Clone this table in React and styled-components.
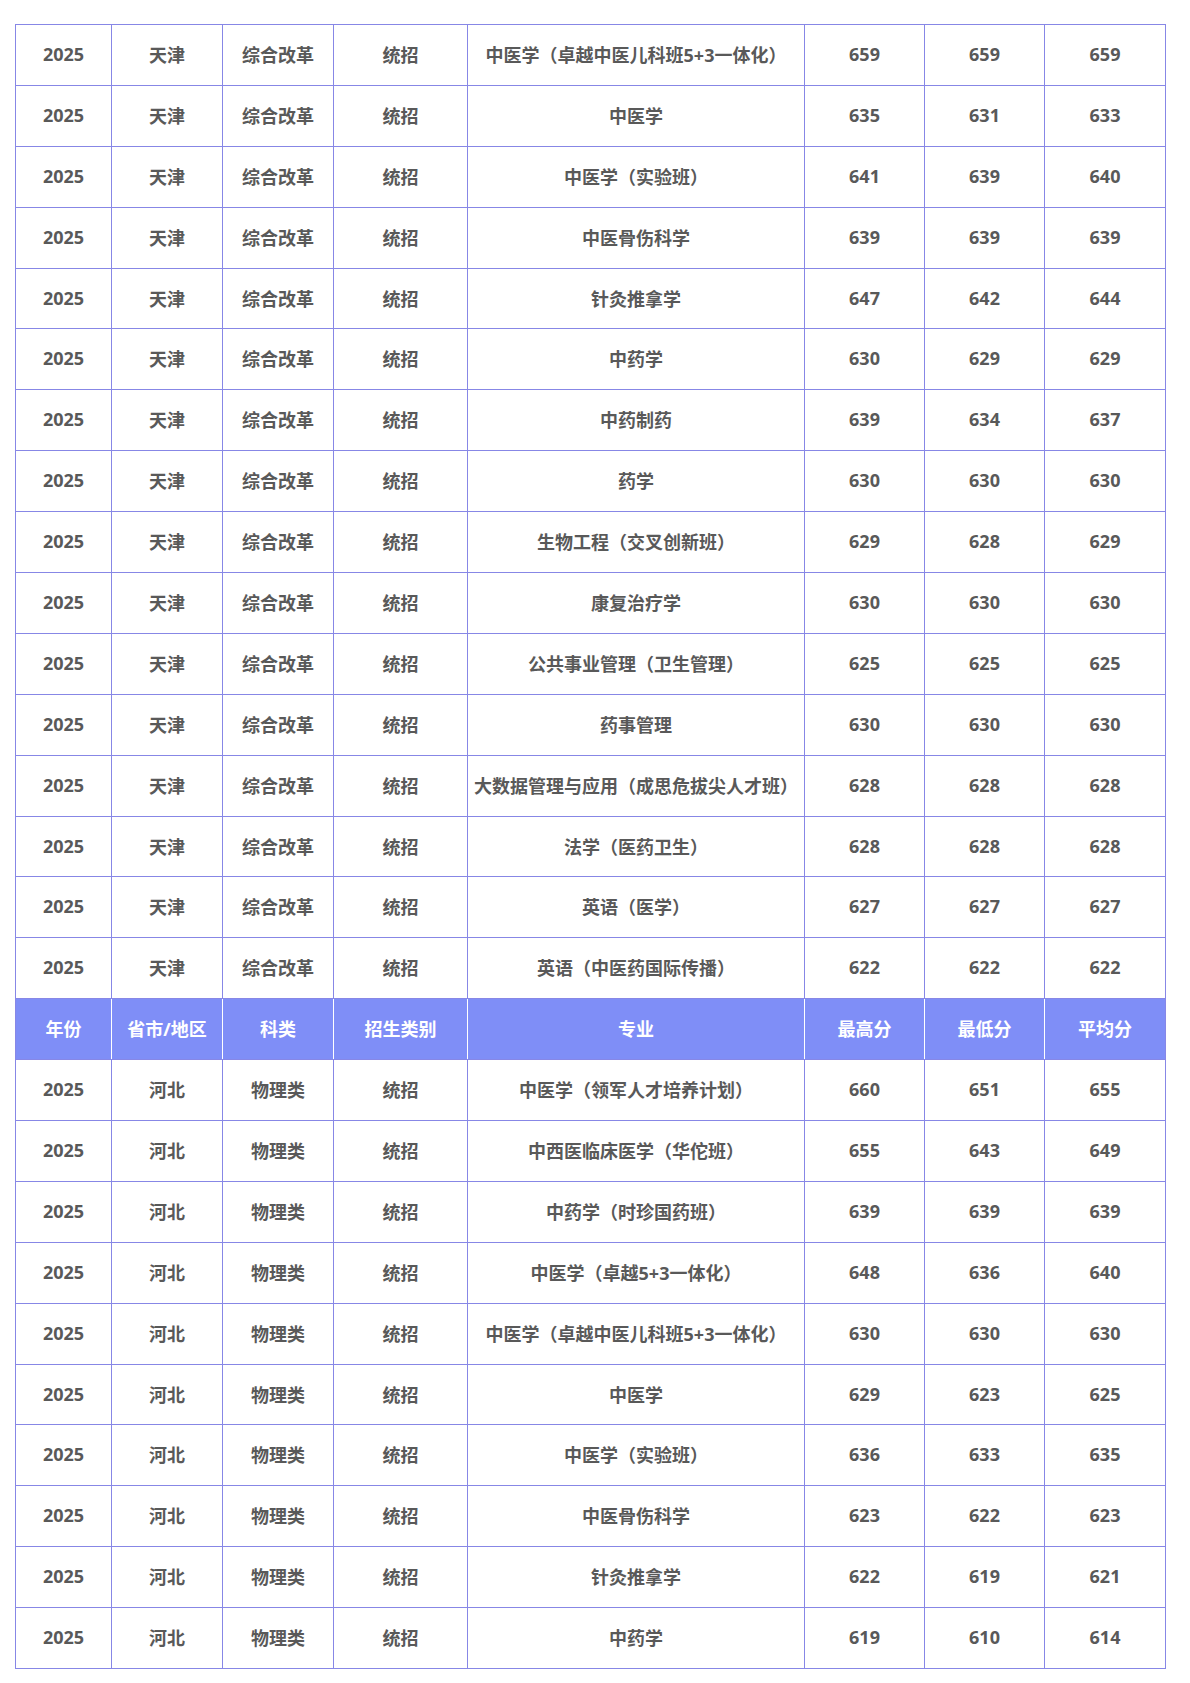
import React from "react";
import styled, { createGlobalStyle } from "styled-components";

const tianjin = [
  ["中医学（卓越中医儿科班5+3一体化）", 659, 659, 659],
  ["中医学", 635, 631, 633],
  ["中医学（实验班）", 641, 639, 640],
  ["中医骨伤科学", 639, 639, 639],
  ["针灸推拿学", 647, 642, 644],
  ["中药学", 630, 629, 629],
  ["中药制药", 639, 634, 637],
  ["药学", 630, 630, 630],
  ["生物工程（交叉创新班）", 629, 628, 629],
  ["康复治疗学", 630, 630, 630],
  ["公共事业管理（卫生管理）", 625, 625, 625],
  ["药事管理", 630, 630, 630],
  ["大数据管理与应用（成思危拔尖人才班）", 628, 628, 628],
  ["法学（医药卫生）", 628, 628, 628],
  ["英语（医学）", 627, 627, 627],
  ["英语（中医药国际传播）", 622, 622, 622],
];

const hebei = [
  ["中医学（领军人才培养计划）", 660, 651, 655],
  ["中西医临床医学（华佗班）", 655, 643, 649],
  ["中药学（时珍国药班）", 639, 639, 639],
  ["中医学（卓越5+3一体化）", 648, 636, 640],
  ["中医学（卓越中医儿科班5+3一体化）", 630, 630, 630],
  ["中医学", 629, 623, 625],
  ["中医学（实验班）", 636, 633, 635],
  ["中医骨伤科学", 623, 622, 623],
  ["针灸推拿学", 622, 619, 621],
  ["中药学", 619, 610, 614],
];

const headers = ["年份", "省市/地区", "科类", "招生类别", "专业", "最高分", "最低分", "平均分"];
const widths = [96, 111, 111, 134, 337, 120, 120, 121];

const GlobalStyle = createGlobalStyle`
  body {
    margin: 0;
    background: #ffffff;
  }
`;

const Page = styled.div`
  padding: 24px 15px 15px;
`;

const Table = styled.table`
  width: 1150px;
  border-collapse: collapse;
  table-layout: fixed;
  font-family: "Open Sans", "Noto Sans CJK SC", sans-serif;
  font-size: 18px;
  font-weight: 700;
`;

const Row = styled.tr`
  height: 60.9px;
`;

const Cell = styled.td`
  border: 1px solid #8787e6;
  color: #595959;
  text-align: center;
  vertical-align: middle;
  padding: 0 0 2px;
  white-space: nowrap;
`;

const HeadCell = styled.td`
  background: #7f8ef7;
  color: #ffffff;
  text-align: center;
  vertical-align: middle;
  padding: 0 0 2px;
  border: 1px solid #8787e6;
  border-left-color: #ffffff;
  border-right-color: #ffffff;
  &:first-child {
    border-left-color: #8787e6;
  }
  &:last-child {
    border-right-color: #8787e6;
  }
`;

function DataRow({ province, track, item }) {
  const [major, high, low, avg] = item;
  return (
    <Row>
      <Cell>2025</Cell>
      <Cell>{province}</Cell>
      <Cell>{track}</Cell>
      <Cell>统招</Cell>
      <Cell>{major}</Cell>
      <Cell>{high}</Cell>
      <Cell>{low}</Cell>
      <Cell>{avg}</Cell>
    </Row>
  );
}

export default function App() {
  return (
    <>
      <GlobalStyle />
      <Page>
        <Table>
          <colgroup>
            {widths.map((w, i) => (
              <col key={i} style={{ width: w }} />
            ))}
          </colgroup>
          <tbody>
            {tianjin.map((item, i) => (
              <DataRow key={`tj_${i}`} province="天津" track="综合改革" item={item} />
            ))}
            <Row>
              {headers.map((h) => (
                <HeadCell key={h}>{h}</HeadCell>
              ))}
            </Row>
            {hebei.map((item, i) => (
              <DataRow key={`hb_${i}`} province="河北" track="物理类" item={item} />
            ))}
          </tbody>
        </Table>
      </Page>
    </>
  );
}
